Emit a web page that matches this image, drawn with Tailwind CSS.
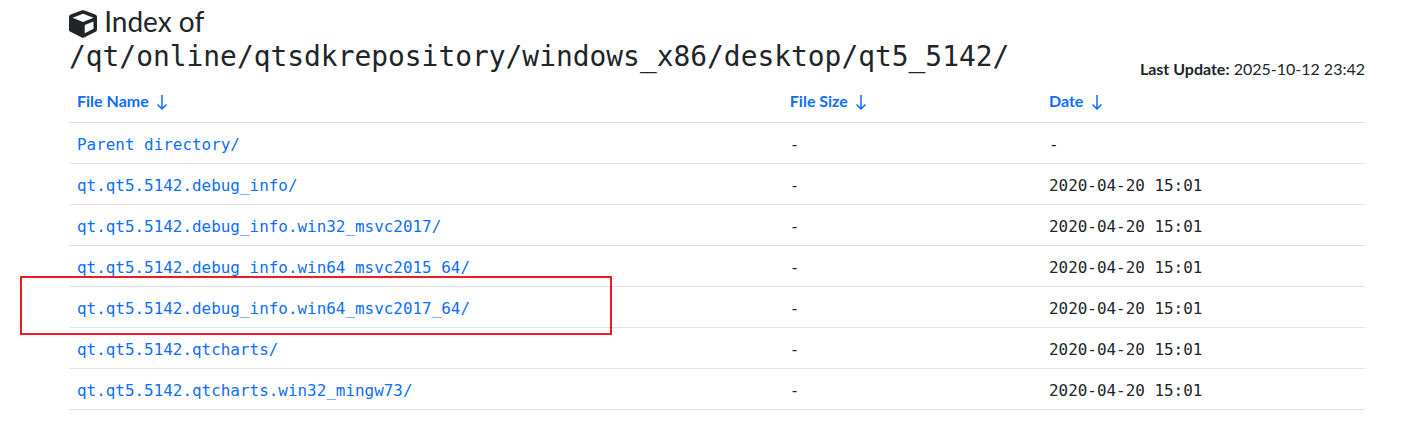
<!DOCTYPE html>
<html lang="en">
<head>
    <meta charset="UTF-8">
    <title>Index of /qt/online/qtsdkrepository/windows_x86/desktop/qt5_5142/</title>
    <script src="https://cdn.jsdelivr.net/npm/@tailwindcss/browser@4"></script>
</head>
<body class="bg-white text-[#212529] font-['Lato',sans-serif] overflow-hidden h-[421px]">
    <div class="relative w-[1296px] ml-[69px]">
        <!-- Title -->
        <div class="flex justify-between items-end h-[81px] pt-[4px]">
            <h1 class="self-start text-[28px] leading-[34px] font-normal">
                <svg class="inline-block w-[28px] h-[28px] align-[-6px]" viewBox="0 0 512 512" fill="currentColor"><path d="M239.1 6.3l-208 78c-18.7 7-31.1 25-31.1 45v225.1c0 18.2 10.3 34.8 26.5 42.9l208 104c13.5 6.8 29.4 6.8 42.9 0l208-104c16.3-8.1 26.5-24.8 26.5-42.9V129.3c0-20-12.4-37.9-31.1-44.9l-208-78C262 2.2 250 2.2 239.1 6.3zM256 68.4l192 72v1.1l-192 78-192-78v-1.1l192-72zm32 356V275.5l160-65v133.9l-160 80z"/></svg>
                Index of<br>
                <span class="font-['DejaVu_Sans_Mono',monospace] text-[27.9px]">/qt/online/qtsdkrepository/windows_x86/desktop/qt5_5142/</span>
            </h1>
            <div class="text-[16px] leading-[24px]"><strong class="font-bold">Last Update:</strong> 2025-10-12 23:42</div>
        </div>

        <!-- Listing -->
        <table class="w-full table-fixed border-collapse text-[16px]">
            <thead>
                <tr class="h-[41px] border-b border-[#dee2e6] text-left text-[#0d6efd]">
                    <th class="w-[55%] px-2 font-bold">File Name <svg class="inline-block w-[12px] h-[16px] ml-[3px] align-[-3px]" viewBox="0 0 12 16" fill="none" stroke="currentColor" stroke-width="1.5"><path d="M6 1v14M1.5 10.5 6 15l4.500-4.500"/></svg></th>
                    <th class="w-[20%] px-2 font-bold">File Size <svg class="inline-block w-[12px] h-[16px] ml-[3px] align-[-3px]" viewBox="0 0 12 16" fill="none" stroke="currentColor" stroke-width="1.5"><path d="M6 1v14M1.5 10.5 6 15l4.500-4.500"/></svg></th>
                    <th class="w-[25%] px-2 font-bold">Date <svg class="inline-block w-[12px] h-[16px] ml-[4px] align-[-3px]" viewBox="0 0 12 16" fill="none" stroke="currentColor" stroke-width="1.5"><path d="M6 1v14M1.5 10.5 6 15l4.500-4.500"/></svg></th>
                </tr>
            </thead>
            <tbody class="font-['DejaVu_Sans_Mono',monospace] text-[15.93px]">
                <tr class="h-[41px] border-b border-[#dee2e6]">
                    <td class="px-2 pt-[4px] text-[#0d6efd]"><a href="#">Parent directory/</a></td>
                    <td class="px-2 pt-[4px]">-</td>
                    <td class="px-2 pt-[4px]">-</td>
                </tr>
                <tr class="h-[41px] border-b border-[#dee2e6]">
                    <td class="px-2 pt-[4px] text-[#0d6efd]"><a href="#">qt.qt5.5142.debug_info/</a></td>
                    <td class="px-2 pt-[4px]">-</td>
                    <td class="px-2 pt-[4px]">2020-04-20 15:01</td>
                </tr>
                <tr class="h-[41px] border-b border-[#dee2e6]">
                    <td class="px-2 pt-[4px] text-[#0d6efd]"><a href="#">qt.qt5.5142.debug_info.win32_msvc2017/</a></td>
                    <td class="px-2 pt-[4px]">-</td>
                    <td class="px-2 pt-[4px]">2020-04-20 15:01</td>
                </tr>
                <tr class="h-[41px] border-b border-[#dee2e6]">
                    <td class="px-2 pt-[4px] text-[#0d6efd]"><a href="#">qt.qt5.5142.debug_info.win64_msvc2015_64/</a></td>
                    <td class="px-2 pt-[4px]">-</td>
                    <td class="px-2 pt-[4px]">2020-04-20 15:01</td>
                </tr>
                <tr class="h-[41px] border-b border-[#dee2e6]">
                    <td class="px-2 pt-[4px] text-[#0d6efd]"><a href="#">qt.qt5.5142.debug_info.win64_msvc2017_64/</a></td>
                    <td class="px-2 pt-[4px]">-</td>
                    <td class="px-2 pt-[4px]">2020-04-20 15:01</td>
                </tr>
                <tr class="h-[41px] border-b border-[#dee2e6]">
                    <td class="px-2 pt-[4px] text-[#0d6efd]"><a href="#">qt.qt5.5142.qtcharts/</a></td>
                    <td class="px-2 pt-[4px]">-</td>
                    <td class="px-2 pt-[4px]">2020-04-20 15:01</td>
                </tr>
                <tr class="h-[41px] border-b border-[#dee2e6]">
                    <td class="px-2 pt-[4px] text-[#0d6efd]"><a href="#">qt.qt5.5142.qtcharts.win32_mingw73/</a></td>
                    <td class="px-2 pt-[4px]">-</td>
                    <td class="px-2 pt-[4px]">2020-04-20 15:01</td>
                </tr>
            </tbody>
        </table>

        <!-- Red annotation box over the row -->
        <div class="absolute left-[-49px] top-[276px] w-[592px] h-[59px] border-2 border-[#ed1c24]"></div>
    </div>
</body>
</html>
